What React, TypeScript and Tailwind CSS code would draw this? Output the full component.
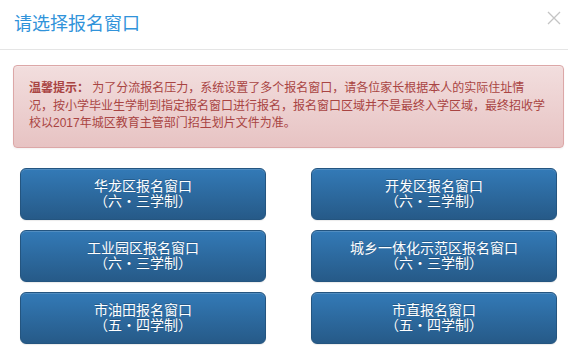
import React from 'react';

const windows = [
  { name: '华龙区报名窗口', system: '（六・三学制）' },
  { name: '开发区报名窗口', system: '（六・三学制）' },
  { name: '工业园区报名窗口', system: '（六・三学制）' },
  { name: '城乡一体化示范区报名窗口', system: '（六・三学制）' },
  { name: '市油田报名窗口', system: '（五・四学制）' },
  { name: '市直报名窗口', system: '（五・四学制）' },
];

const font = { fontFamily: '"Liberation Sans", "Noto Sans CJK SC", sans-serif' };

function WindowButton({ name, system, right }: { name: string; system: string; right: boolean }) {
  return (
    <div className={`flex ${right ? 'justify-end' : 'justify-start'} px-[7px]`}>
      <button
        type="button"
        className="flex h-[52px] w-[246px] flex-col items-center justify-center rounded-[6px] border border-[#245580] bg-gradient-to-b from-[#337ab7] to-[#265a88] text-[14px] leading-[15px] text-white shadow-[inset_0_1px_0_rgba(255,255,255,0.15),0_1px_1px_rgba(0,0,0,0.08)] [text-shadow:0_-1px_0_rgba(0,0,0,0.2)]"
      >
        <span>{name}</span>
        <span>{system}</span>
      </button>
    </div>
  );
}

export default function App() {
  return (
    <div className="h-[353px] w-[568px] overflow-hidden bg-white" style={font}>
      <div className="relative flex h-[50px] items-center border-b border-[#e5e5e5] pl-[14px]">
        <h4 className="pb-[2px] text-[18px] font-normal leading-[22px] text-[#3193da]">请选择报名窗口</h4>
        <button type="button" className="absolute right-[7px] top-[11px] h-[14px] w-[14px]" aria-label="关闭">
          <svg viewBox="0 0 14 14" className="h-[14px] w-[14px]">
            <path d="M1 1L13 13M13 1L1 13" stroke="#c4c4c4" strokeWidth="1.3" fill="none" />
          </svg>
        </button>
      </div>

      <div className="pl-[13px] pr-[4px] pt-[15px]">
        <div className="rounded-[4px] border border-[#dca7a7] bg-gradient-to-b from-[#f2dede] to-[#e7c3c3] px-[15px] py-[14px] text-[12px] leading-[17.5px] text-[#a94442] shadow-[inset_0_1px_0_rgba(255,255,255,0.25),0_1px_2px_rgba(0,0,0,0.05)]">
          <p className="whitespace-nowrap">
            <strong className="font-bold">温馨提示：</strong> 为了分流报名压力，系统设置了多个报名窗口，请各位家长根据本人的实际住址情
            <br />
            况，按小学毕业生学制到指定报名窗口进行报名，报名窗口区域并不是最终入学区域，最终招收学
            <br />
            校以2017年城区教育主管部门招生划片文件为准。
          </p>
        </div>

        <div className="mt-[20px] grid grid-cols-2 gap-y-[10px]">
          {windows.map((w, i) => (
            <WindowButton key={w.name} name={w.name} system={w.system} right={i % 2 === 1} />
          ))}
        </div>
      </div>
    </div>
  );
}
